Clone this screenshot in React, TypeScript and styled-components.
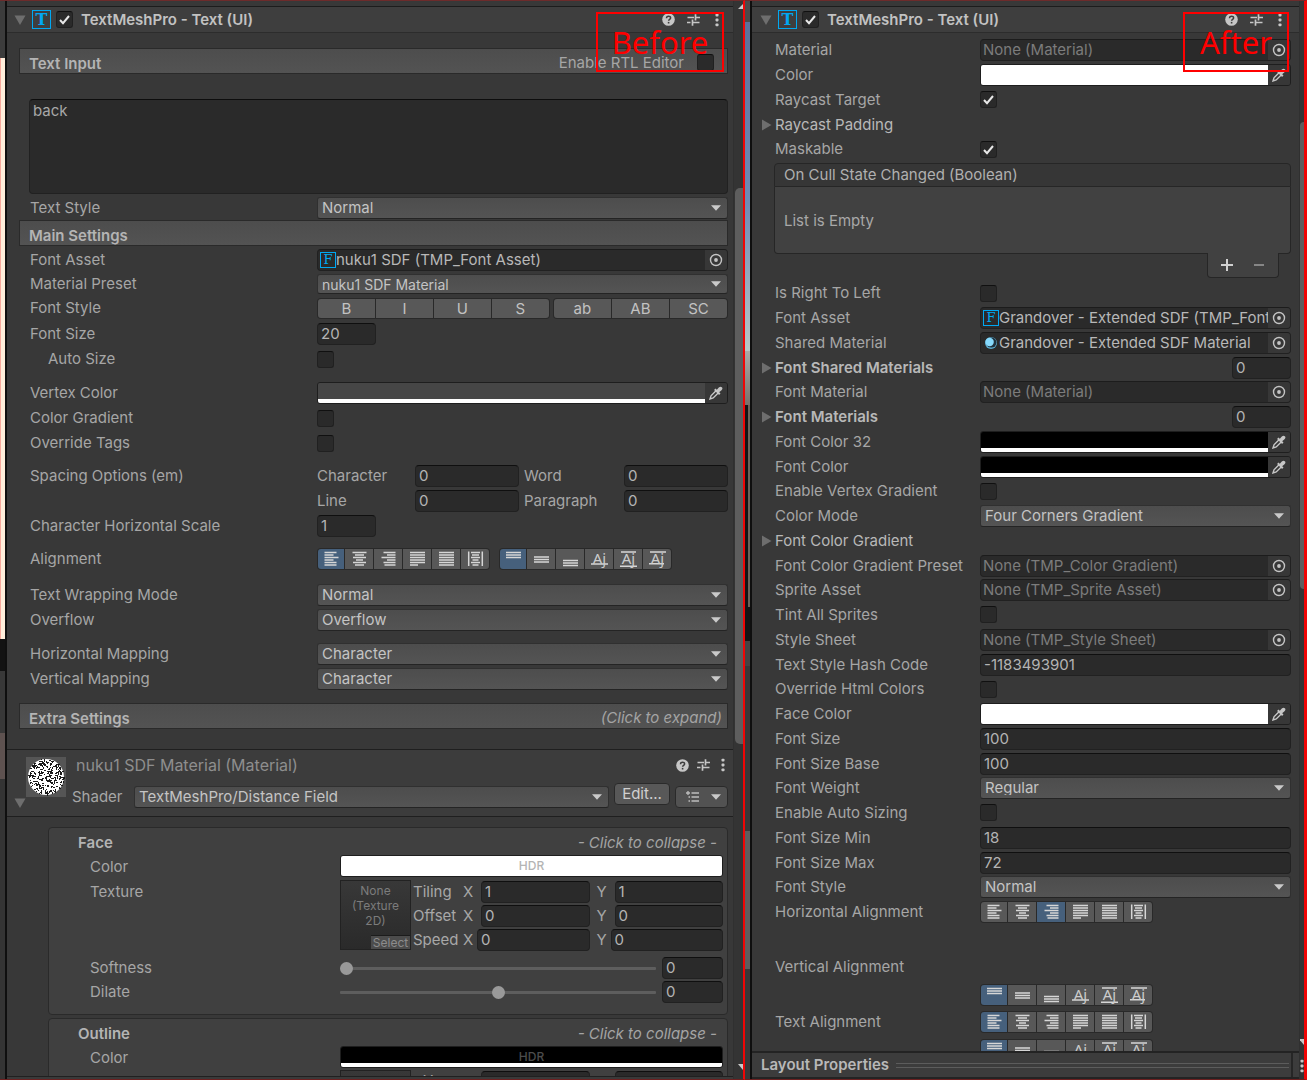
import React, { useId } from "react";
import styled, { createGlobalStyle, css } from "styled-components";

const Global = createGlobalStyle`
  *, *::before, *::after { box-sizing: border-box; }
  html, body, #root { height: 100%; }
  body {
    margin: 0;
    background: #fff;
    color: #a8a8a8;
    font: 15px/20px Inter, "Open Sans", sans-serif;
    overflow: hidden;
  }
  button, input, select, textarea { font: inherit; color: inherit; margin: 0; }
  button { padding: 0; border: 0; background: none; }
  button:focus-visible, input:focus-visible, select:focus-visible { outline: 1px solid #3a79bb; }
`;

/* ---------- page frame ---------- */

const Page = styled.main`
  display: flex;
  height: 100vh;
  padding-right: 7px;
  overflow: hidden;
`;

const Shot = styled.section<{ $grow: number; $edge: number }>`
  position: relative;
  display: flex;
  flex: ${(p) => p.$grow} 1 0;
  min-width: 0;
  border-top: 1px solid #6d2b2b;
  border-bottom: 1px solid #6d2020;
  border-right: ${(p) => p.$edge}px solid #f00505;
  background: #383838;
`;

const Sliver = styled.div<{ $width: number; $line: number }>`
  display: flex;
  flex-direction: column;
  flex: none;
  width: ${(p) => p.$width}px;
  border-right: ${(p) => p.$line}px solid #0f0f0f;
  background: #383838;
`;

const Band = styled.div<{ $h: number; $fill: string }>`
  flex: ${(p) => p.$h} 1 0;
  background: ${(p) => p.$fill};
`;

const Inspector = styled.div`
  display: flex;
  flex-direction: column;
  flex: 1;
  min-width: 0;
  background: #383838;
`;

const Clip = styled.div`
  flex: 1;
  min-height: 0;
  overflow: hidden;
`;

const TopStrip = styled.div`
  height: 6px;
  border-bottom: 1px solid #1c1c1c;
  background: #383838;
`;

const BottomStrip = styled.div`
  height: 3px;
  border-top: 1px solid #202020;
  background: #3a3a3a;
`;

const Scrollbar = styled.div<{ $width: number }>`
  display: flex;
  flex-direction: column;
  align-items: flex-end;
  flex: none;
  width: ${(p) => p.$width}px;
  border-left: 1px solid #303030;
  background: #343434;
  overflow: hidden;
`;

const Space = styled.div<{ $h: number }>`
  flex: ${(p) => p.$h} 1 0;
`;

const Thumb = styled.div<{ $h: number; $width: number }>`
  flex: ${(p) => p.$h} 1 0;
  width: ${(p) => p.$width}px;
  border-radius: 5px 0 0 5px;
  background: #5e5e5e;
`;

const Note = styled.div<{ $right: number; $width: number }>`
  position: absolute;
  top: 11px;
  right: ${(p) => p.$right}px;
  width: ${(p) => p.$width}px;
  height: 60px;
  border: 2px solid #f00;
  color: #f00;
  font: 31px/56px "Noto Sans", "Open Sans", sans-serif;
  text-align: center;
  pointer-events: none;
`;

/* ---------- header ---------- */

const Header = styled.header<{ $pad: string }>`
  display: flex;
  align-items: center;
  height: 26px;
  padding: ${(p) => p.$pad};
  border-bottom: 1px solid #2c2c2c;
  background: #3e3e3e;
`;

const Title = styled.h2`
  flex: 1;
  margin: 0 0 0 8px;
  color: #c2c2c2;
  font-size: 15px;
  line-height: 20px;
  font-weight: 600;
  white-space: nowrap;
`;

const Tools = styled.div<{ $gap: number }>`
  display: flex;
  align-items: center;
  gap: ${(p) => p.$gap}px;
  height: 16px;
  button, svg { display: block; }
`;

const Fold = styled.button`
  flex: none;
  display: block;
  width: 12px;
  height: 12px;
  svg { display: block; }
`;

const Glyph = styled.span<{ $size: number; $font: number }>`
  flex: none;
  width: ${(p) => p.$size}px;
  height: ${(p) => p.$size}px;
  border: 1px solid #00a8f2;
  color: #00a8f2;
  font: ${(p) => p.$font}px/${(p) => p.$size - 2}px "DejaVu Serif", serif;
  text-align: center;
`;

const HeaderGlyph = styled(Glyph)`
  margin: 0 5px 0 6px;
  font-weight: 700;
`;

/* ---------- bars, groups, rows ---------- */

const Bar = styled.div<{ $top: number }>`
  display: flex;
  align-items: center;
  justify-content: space-between;
  height: 26px;
  margin: ${(p) => p.$top}px 5px 0 12px;
  padding: 3px 5px 0 9px;
  border: 1px solid #2a2a2a;
  background: linear-gradient(#4d4d4d, #535353);
  > h3 { padding-top: 2px; }
`;

const BarTitle = styled.h3`
  margin: 0;
  font-size: 15px;
  line-height: 20px;
  font-weight: 600;
  color: #b4b4b4;
`;

const BarHint = styled.button`
  font-style: italic;
  color: #a4a4a4;
`;

const BarToggle = styled.div`
  display: flex;
  align-items: center;
  gap: 13px;
  padding-right: 8px;
`;

const TextArea = styled.textarea`
  display: block;
  width: calc(100% - 27px);
  height: 95px;
  margin: 25px 5px 0 22px;
  padding: 1px 3px;
  border: 1px solid #212121;
  border-top-color: #0d0d0d;
  border-radius: 4px;
  background: #2a2a2a;
  color: #a8a8a8;
  resize: none;
`;

const LeftGroup = styled.div<{ $top: number; $gap?: number }>`
  display: flex;
  flex-direction: column;
  gap: ${(p) => p.$gap ?? 1}px;
  margin: ${(p) => p.$top}px 5px 0 23px;
`;

const LeftRow = styled.div`
  display: grid;
  grid-template-columns: 287px minmax(0, 1fr);
  align-items: center;
  height: 24px;
`;

const RightGroup = styled.div<{ $top: number }>`
  margin: ${(p) => p.$top}px 8px 0 9px;
`;

const RightRow = styled.div`
  display: grid;
  grid-template-columns: 14px 205px minmax(0, 1fr);
  align-items: center;
  height: 25px;
  &:nth-child(4n + 1) { height: 24px; }
`;

const Label = styled.label<{ $indent?: number; $bold?: boolean; $bright?: boolean }>`
  padding-left: ${(p) => p.$indent ?? 0}px;
  white-space: nowrap;
  font-weight: ${(p) => (p.$bold ? 600 : 400)};
  color: ${(p) => (p.$bold || p.$bright ? "#b8b8b8" : "#a6a6a6")};
`;

/* ---------- controls ---------- */

const sunken = css`
  border: 1px solid #212121;
  border-top-color: #0f0f0f;
  border-radius: 4px;
  background: #2a2a2a;
`;

const TextBox = styled.input<{ $width?: number }>`
  width: ${(p) => (p.$width ? p.$width + "px" : "100%")};
  min-width: 0;
  height: 22px;
  padding: 0 3px 1px;
  color: #b4b4b4;
  ${sunken}
`;

const CountBox = styled(TextBox)`
  justify-self: end;
`;

const Check = styled.span`
  flex: none;
  display: grid;
  width: 17px;
  height: 17px;
  > * { grid-area: 1 / 1; margin: 0; }
  svg { pointer-events: none; place-self: center; }
`;

const CheckInput = styled.input`
  appearance: none;
  width: 17px;
  height: 17px;
  border: 1px solid #202020;
  border-top-color: #101010;
  border-radius: 3px;
  background: #2a2a2a;
`;

const SelectWrap = styled.span`
  display: grid;
  flex: 1;
  min-width: 0;
  > * { grid-area: 1 / 1; }
  svg { place-self: center end; margin-right: 7px; pointer-events: none; }
`;

const Select = styled.select<{ $small?: boolean }>`
  appearance: none;
  width: 100%;
  height: ${(p) => (p.$small ? 20 : 22)}px;
  padding: 0 20px 3px 4px;
  border: 1px solid #303030;
  border-bottom-color: #242424;
  border-radius: 3px;
  background: linear-gradient(#4d4d4d, #545454);
  color: #c4c4c4;
  font-size: ${(p) => (p.$small ? 14 : 15)}px;
`;

const ObjectBox = styled.span`
  display: flex;
  align-items: center;
  height: 22px;
  padding-left: 2px;
  overflow: hidden;
  ${sunken}
  border-top-color: #1c1c1c;
`;

const ObjectValue = styled.input<{ $empty?: boolean }>`
  flex: 1;
  min-width: 0;
  height: 20px;
  padding: 0;
  border: 0;
  background: none;
  color: ${(p) => (p.$empty ? "#7c7c7c" : "#b8b8b8")};
`;

const Picker = styled.button`
  flex: none;
  display: grid;
  place-items: center;
  width: 22px;
  height: 20px;
  background: #373737;
`;

const ColorBox = styled.span`
  display: flex;
  height: 22px;
  border: 1px solid #1e1e1e;
  border-radius: 3px;
  overflow: hidden;
  background: #383838;
`;

const Swatch = styled.span`
  flex: 1;
  min-width: 0;
  display: grid;
  grid-template-rows: 16px 4px;
`;

const ColorInput = styled.input`
  appearance: none;
  grid-area: 1 / 1;
  width: 100%;
  height: 16px;
  padding: 0;
  border: 0;
  background: none;
  &::-webkit-color-swatch-wrapper { padding: 0; }
  &::-webkit-color-swatch { border: 0; border-radius: 0; }
`;

const Alpha = styled.span`
  grid-area: 2 / 1;
  background: #fff;
`;

const Hdr = styled.span<{ $color: string }>`
  grid-area: 1 / 1 / 3 / 2;
  place-self: center;
  z-index: 1;
  color: ${(p) => p.$color};
  font-size: 12px;
  font-weight: 500;
  pointer-events: none;
`;

const Segments = styled.div<{ $fill?: boolean }>`
  display: flex;
  gap: ${(p) => (p.$fill ? 3 : 9)}px;
`;

const Segment = styled.div<{ $n?: number }>`
  display: flex;
  flex: ${(p) => (p.$n ? p.$n + " 1 0" : "none")};
  gap: 1px;
  padding: 1px;
  border-radius: 4px;
  background: #292929;
`;

const SegButton = styled.button<{ $on?: boolean; $fill?: boolean }>`
  display: grid;
  place-items: center;
  ${(p) => (p.$fill ? "flex: 1; padding-bottom: 1px;" : "width: 28px;")}
  height: ${(p) => (p.$fill ? 19 : 20)}px;
  background: ${(p) => (p.$on ? "#46607c" : "#585858")};
  color: #c2c2c2;
  &:first-child { border-radius: 3px 0 0 3px; ${(p) => (p.$fill ? "" : "width: 26px;")} }
  &:last-child { border-radius: 0 3px 3px 0; }
  svg { overflow: visible; }
`;

const Spacing = styled.div`
  display: grid;
  grid-template-columns: 98px minmax(0, 1fr) 105px minmax(0, 1fr);
  align-items: center;
  label + input + label { padding-left: 5px; }
`;

/* ---------- event list ---------- */

const EventBox = styled.div`
  display: flex;
  flex-direction: column;
  margin: 2px 8px 0 22px;
`;

const EventTitle = styled.div`
  height: 24px;
  padding: 1px 9px;
  border: 1px solid #262626;
  border-radius: 4px 4px 0 0;
  background: #363636;
  color: #b0b0b0;
`;

const EventBody = styled.div`
  height: 67px;
  padding: 24px 9px 0;
  border: 1px solid #262626;
  border-top: 0;
  border-radius: 0 0 4px 4px;
  background: #414141;
`;

const EventFoot = styled.div`
  align-self: flex-end;
  display: flex;
  justify-content: space-around;
  align-items: center;
  width: 72px;
  height: 25px;
  margin: -1px 12px 0 0;
  padding: 0 3px;
  border: 1px solid #262626;
  border-top: 0;
  border-radius: 0 0 4px 4px;
  background: #414141;
  svg { display: block; }
`;

/* ---------- material ---------- */

const MatHeader = styled.header`
  display: flex;
  height: 68px;
  margin-top: 20px;
  padding: 7px 5px 0 7px;
  border-top: 1px solid #1f1f1f;
  border-bottom: 1px solid #1f1f1f;
  background: #3c3c3c;
`;

const MatFold = styled.div`
  align-self: flex-end;
  height: 19px;
`;

const MatPreview = styled.svg`
  flex: none;
  display: block;
  background: #555;
`;

const MatMain = styled.div`
  flex: 1;
  min-width: 0;
  padding-left: 6px;
`;

const MatTitleRow = styled.div`
  display: flex;
  justify-content: space-between;
  align-items: flex-start;
  height: 26px;
  padding-left: 4px;
`;

const MatTitle = styled.h2`
  margin: 0;
  color: #8e8e8e;
  font-size: 16px;
  line-height: 16px;
  font-weight: 400;
`;

const ShaderRow = styled.div`
  display: flex;
  align-items: center;
  height: 28px;
  label { width: 62px; }
`;

const EditButton = styled.button`
  align-self: flex-start;
  width: 56px;
  height: 22px;
  margin: 0 5px;
  padding-bottom: 2px;
  border: 1px solid #2a2a2a;
  border-radius: 4px;
  background: #585858;
  color: #d0d0d0;
`;

const ListButton = styled.button`
  display: flex;
  align-items: center;
  justify-content: space-between;
  width: 53px;
  height: 22px;
  padding: 0 6px 0 10px;
  border: 1px solid #2a2a2a;
  border-radius: 4px;
  background: #525252;
`;

const MatGroup = styled.section<{ $top: number }>`
  margin: ${(p) => p.$top}px 5px 0 41px;
  padding: 3px 4px 10px 29px;
  border: 1px solid #2a2a2a;
  border-radius: 4px;
  background: #404040;
`;

const MatGroupHead = styled.div`
  display: flex;
  justify-content: space-between;
  align-items: center;
  height: 24px;
  padding-right: 6px;
`;

const MatRow = styled.div<{ $h?: number }>`
  display: grid;
  grid-template-columns: 262px minmax(0, 1fr);
  align-items: start;
  height: ${(p) => p.$h ?? 24}px;
  > label, > span:first-child { padding-left: 12px; line-height: 24px; }
`;

const TexArea = styled.div`
  display: flex;
  gap: 2px;
`;

const TexBox = styled.div`
  display: flex;
  flex-direction: column;
  flex: none;
  width: 71px;
  height: 70px;
  border: 1px solid #222;
  background: linear-gradient(#383838, #2a2a2a);
  color: #7c7c7c;
  font-size: 12px;
  line-height: 15px;
  text-align: center;
  padding-top: 2px;
`;

const TexSelect = styled.button`
  align-self: flex-end;
  width: 39px;
  height: 14px;
  margin-top: auto;
  border-top: 1px solid #1c1c1c;
  background: #4c4c4c;
  color: #8c8c8c;
  line-height: 13px;
`;

const Vectors = styled.div`
  flex: 1;
  min-width: 0;
  display: grid;
  grid-auto-rows: 24px;
`;

const Vector = styled.div<{ $axis: number }>`
  display: flex;
  align-items: center;
  > span { width: 50px; }
  label { flex: none; width: ${(p) => p.$axis}px; }
  input { flex: 1; margin-right: 7px; }
  input:last-child { margin-right: 0; }
`;

const SliderArea = styled.div`
  display: flex;
  align-items: center;
  gap: 6px;
  height: 24px;
`;

const Range = styled.input`
  appearance: none;
  flex: 1;
  min-width: 0;
  height: 13px;
  background: none;
  &::-webkit-slider-runnable-track { height: 3px; border-radius: 1px; background: #5e5e5e; }
  &::-webkit-slider-thumb {
    appearance: none;
    width: 13px;
    height: 13px;
    margin-top: -5px;
    border-radius: 50%;
    background: #999;
  }
`;

/* ---------- footer ---------- */

const LayoutBar = styled.footer`
  display: flex;
  align-items: center;
  height: 28px;
  padding-left: 9px;
  border-top: 2px solid #232323;
  border-bottom: 2px solid #232323;
  background: #3c3c3c;
`;

const LayoutTitle = styled.h3`
  margin: 0 7px 0 0;
  color: #b8b8b8;
  font-size: 15px;
  line-height: 20px;
  font-weight: 600;
`;

const Grip = styled.span`
  flex: 1;
  height: 5px;
  margin-right: 2px;
  border: solid #5c5c5c;
  border-width: 1px 0;
`;

const Divider = styled.span`
  align-self: stretch;
  width: 2px;
  margin-right: 6px;
  background: #262626;
`;

/* ---------- drawings ---------- */

const Down = () => (
  <svg width="12" height="12" viewBox="0 0 12 12"><path d="M0.500 1.500h11L6 11z" fill="#6e6e6e" /></svg>
);
const RightTri = () => (
  <svg width="11" height="12" viewBox="0 0 11 12"><path d="M1 0.500v11L10.500 6z" fill="#6e6e6e" /></svg>
);
const Caret = () => (
  <svg width="10" height="6" viewBox="0 0 10 6"><path d="M0 0.300h10L5 5.800z" fill="#cacaca" /></svg>
);
const Tick = () => (
  <svg width="13" height="13" viewBox="0 0 13 13">
    <path d="M2 7l3 3.200L11 3" fill="none" stroke="#e8e8e8" strokeWidth="2" />
  </svg>
);
const Help = () => (
  <svg width="13" height="13" viewBox="0 0 13 13">
    <circle cx="6.500" cy="6.500" r="6.300" fill="#c6c6c6" />
    <path d="M4.500 5.200c0-2.800 4.200-2.500 4.100-.2 0 1.300-2 1.400-2 2.800" fill="none" stroke="#3c3c3c" strokeWidth="1.500" />
    <rect x="5.800" y="8.900" width="1.600" height="1.600" fill="#3c3c3c" />
  </svg>
);
const Presets = () => (
  <svg width="13" height="12" viewBox="0 0 13 12" fill="none" stroke="#c6c6c6" strokeWidth="1.700">
    <path d="M0.500 3.500h6.500M8.500 3.500h4.500M8.500 0.300v6.200M0 8.500h3.500M5.500 8.500h7M5.500 5.500v6.200" />
  </svg>
);
const Dots = ({ w = 10 }: { w?: number }) => (
  <svg width={w} height="14" viewBox={`${(10 - w) / 2} 0 ${w} 14`} fill="#c8c8c8">
    <rect x="3.500" y="0.800" width="3" height="2.800" rx="0.800" />
    <rect x="3.500" y="5.600" width="3" height="2.800" rx="0.800" />
    <rect x="3.500" y="10.400" width="3" height="2.800" rx="0.800" />
  </svg>
);
const Target = () => (
  <svg width="14" height="14" viewBox="0 0 14 14">
    <circle cx="7" cy="7" r="5.500" fill="none" stroke="#c4c4c4" strokeWidth="1.400" />
    <circle cx="7" cy="7" r="1.900" fill="#c4c4c4" />
  </svg>
);
const Dropper = () => (
  <svg width="14" height="14" viewBox="0 0 14 14">
    <path d="M7 4.800L2 9.800 1 13 4.200 12 9.200 7" fill="none" stroke="#c6c6c6" strokeWidth="1.400" />
    <path d="M5.800 3.200L10.800 8.200" stroke="#c6c6c6" strokeWidth="2" />
    <path d="M7.200 4.500L9.800 1.600q1.600-1.600 3-.3t-.3 3L9.500 6.800z" fill="#c6c6c6" />
  </svg>
);
const SphereSvg = styled.svg`
  flex: none;
`;
const Sphere = () => (
  <SphereSvg width="16" height="14" viewBox="0 0 16 14">
    <circle cx="8" cy="7" r="6" fill="#5aa9cc" />
    <circle cx="8.400" cy="6.600" r="5" fill="#20323e" />
    <circle cx="6.600" cy="6" r="4.200" fill="#86d9fc" />
  </SphereSvg>
);
const ListIcon = () => (
  <svg width="14" height="12" viewBox="0 0 14 12" stroke="#bdbdbd" strokeWidth="1.300">
    <path d="M0 2h4M2 0v4M5.500 2H13M5.500 6H13M5.500 10H13M2.500 6h1.500M2.500 10h1.500" />
  </svg>
);
const Arrow = ({ up }: { up?: boolean }) => (
  <svg width="5" height="6" viewBox="0 0 5 6"><path d={up ? "M5 0v5H0z" : "M5 6V0H0z"} fill="#c8c8c8" /></svg>
);

const LINES: Record<string, string> = {
  left: "M0.500 1.500h12M0.500 4h9M0.500 6.500h14M0.500 9h9M0.500 11.500h12M0.500 14h12",
  center: "M0.500 1.500h14M3 4h9M1 6.500h13M4 9h7M1 11.500h13M3 14h9",
  right: "M2.500 1.500h12M6 4h8.500M0.500 6.500h14M6 9h8.500M2.500 11.500h12M3.500 14h11",
  justify: "M0 1.500h15M0 4h15M0 6.500h15M0 9h15M0 11.500h15M0 14h8",
  flush: "M0 1.500h15M0 4h15M0 6.500h15M0 9h15M0 11.500h15M0 14h15",
  geometry: "M0.700 0.500v14.500M14.300 0.500v14.500M3 1.500h9M4 4h7M3 6.500h9M4.500 9h6M3 11.500h9M4.500 14h6",
  top: "M0 1.500h15M0 4h15M0 6.500h15",
  middle: "M0 6h15M0 8.500h15M0 11h15",
  bottom: "M0 9.500h15M0 12h15M0 14.500h15",
  baseline: "M0 13h17",
  midline: "M1 1h15M0 15.300h17",
  capline: "M1 1h16M0 12.700h15",
};

function AlignIcon({ kind }: { kind: string }) {
  const glyph = ["baseline", "midline", "capline"].includes(kind);
  return (
    <svg width={glyph ? 17 : 15} height="16" viewBox={`0 0 ${glyph ? 17 : 15} 16`}>
      <path d={LINES[kind]} stroke="#d6d6d6" strokeWidth="1.500" />
      {glyph && (
        <text x="8.500" y="12.500" textAnchor="middle" fontFamily="Noto Sans, sans-serif" fontSize="15" fill="#cccccc">Aj</text>
      )}
    </svg>
  );
}

/* Speckled ball of the distance-field preview, from a fixed-seed generator. */
const speckles = (() => {
  let s = 7;
  const rnd = () => (s = (s * 16807) % 2147483647) / 2147483647;
  let d = "";
  for (let i = 0; i < 290; i++) {
    const a = rnd() * Math.PI * 2;
    const r = Math.sqrt(rnd()) * 18;
    const x = Math.round(19.5 + Math.cos(a) * r);
    const y = Math.round(19.5 + Math.sin(a) * r);
    const k = rnd();
    d += k < 0.3 ? `M${x} ${y}h2v1h-2z` : k < 0.6 ? `M${x} ${y}h1v2h-1z` : `M${x} ${y}h1v1h-1z`;
  }
  return d;
})();

/* ---------- composed parts ---------- */

type Render = (id: string) => React.ReactNode;

function LField({ label, indent, children }: { label: string; indent?: number; children: Render }) {
  const id = useId();
  return (
    <LeftRow>
      <Label htmlFor={id} $indent={indent}>{label}</Label>
      {children(id)}
    </LeftRow>
  );
}

function RField({ label, fold, bold, children }: { label: string; fold?: boolean; bold?: boolean; children?: Render }) {
  const id = useId();
  return (
    <RightRow>
      {fold ? <Fold aria-label={"Expand " + label}><RightTri /></Fold> : <span />}
      {children ? (
        <Label htmlFor={id} $bold={bold} $bright={fold}>{label}</Label>
      ) : (
        <Label as="span" $bright={fold}>{label}</Label>
      )}
      {children?.(id)}
    </RightRow>
  );
}

function CheckBox({ id, on, label }: { id?: string; on?: boolean; label?: string }) {
  const [checked, setChecked] = React.useState(!!on);
  return (
    <Check>
      <CheckInput type="checkbox" id={id} aria-label={label} checked={checked} onChange={() => setChecked(!checked)} />
      {checked && <Tick />}
    </Check>
  );
}

function DropDown({ id, value, small }: { id: string; value: string; small?: boolean }) {
  return (
    <SelectWrap>
      <Select id={id} $small={small} defaultValue={value}><option>{value}</option></Select>
      <Caret />
    </SelectWrap>
  );
}

function ObjectField({ id, value, icon }: { id: string; value: string; icon?: React.ReactNode }) {
  return (
    <ObjectBox>
      {icon}
      <ObjectValue id={id} readOnly value={value} $empty={value.startsWith("None")} />
      <Picker aria-label="Pick object"><Target /></Picker>
    </ObjectBox>
  );
}

function ColorField({ id, value, hdr }: { id: string; value: string; hdr?: string }) {
  return (
    <ColorBox>
      <Swatch>
        <ColorInput type="color" id={id} defaultValue={value} />
        <Alpha />
        {hdr && <Hdr $color={hdr}>HDR</Hdr>}
      </Swatch>
      {!hdr && <Picker aria-label="Pick color"><Dropper /></Picker>}
    </ColorBox>
  );
}

const HORIZONTAL = ["left", "center", "right", "justify", "flush", "geometry"];
const VERTICAL = ["top", "middle", "bottom", "baseline", "midline", "capline"];

function AlignGroup({ kinds, on, id }: { kinds: string[]; on: string; id?: string }) {
  return (
    <Segment>
      {kinds.map((k, i) => (
        <SegButton key={k} id={i === 0 ? id : undefined} $on={k === on} aria-pressed={k === on} aria-label={"Align " + k}>
          <AlignIcon kind={k} />
        </SegButton>
      ))}
    </Segment>
  );
}

function StyleGroup({ items }: { items: string[] }) {
  return (
    <Segment $n={items.length}>
      {items.map((t) => <SegButton key={t} $fill>{t}</SegButton>)}
    </Segment>
  );
}

function HeaderTools({ gap }: { gap: number }) {
  return (
    <Tools $gap={gap}>
      <button aria-label="Help"><Help /></button>
      <button aria-label="Presets"><Presets /></button>
      <button aria-label="More"><Dots /></button>
    </Tools>
  );
}

function ComponentHeader({ pad, gap }: { pad: string; gap: number }) {
  return (
    <Header $pad={pad}>
      <Fold aria-label="Collapse component"><Down /></Fold>
      <HeaderGlyph $size={19} $font={16}>T</HeaderGlyph>
      <CheckBox on label="Component enabled" />
      <Title>TextMeshPro - Text (UI)</Title>
      <HeaderTools gap={gap} />
    </Header>
  );
}

function Axis({ name, value, owner }: { name: string; value: string; owner: string }) {
  const id = useId();
  return (
    <>
      <Label htmlFor={id}>{name}</Label>
      <TextBox id={id} defaultValue={value} aria-label={owner + " " + name} />
    </>
  );
}

function TextureRow({ tall }: { tall?: boolean }) {
  return (
    <MatRow $h={tall ? 76 : 24}>
      <Label as="span">Texture</Label>
      <TexArea>
        <TexBox>
          <span>None<br />(Texture<br />2D)</span>
          <TexSelect>Select</TexSelect>
        </TexBox>
        <Vectors>
          <Vector $axis={18}><span>Tiling</span><Axis name="X" value="1" owner="Tiling" /><Axis name="Y" value="1" owner="Tiling" /></Vector>
          {tall && <Vector $axis={18}><span>Offset</span><Axis name="X" value="0" owner="Offset" /><Axis name="Y" value="0" owner="Offset" /></Vector>}
          {tall && <Vector $axis={14}><span>Speed</span><Axis name="X" value="0" owner="Speed" /><Axis name="Y" value="0" owner="Speed" /></Vector>}
        </Vectors>
      </TexArea>
    </MatRow>
  );
}

function MField({ label, h, children }: { label: string; h?: number; children: Render }) {
  const id = useId();
  return (
    <MatRow $h={h}>
      <Label htmlFor={id}>{label}</Label>
      {children(id)}
    </MatRow>
  );
}

function Slider({ id, at, name }: { id: string; at: number; name: string }) {
  return (
    <SliderArea>
      <Range type="range" id={id} defaultValue={at} />
      <TextBox $width={61} defaultValue="0" aria-label={name + " value"} />
    </SliderArea>
  );
}

const FontIcon = () => <Glyph $size={16} $font={13}>F</Glyph>;

/* ---------- panels ---------- */

function BeforePanel() {
  const rtl = useId();
  const sp = useId();
  return (
    <Inspector>
      <Clip>
        <TopStrip />
        <ComponentHeader pad="0 11px 0 7px" gap={12} />
        <Bar $top={15}>
          <BarTitle>Text Input</BarTitle>
          <BarToggle>
            <Label htmlFor={rtl}>Enable RTL Editor</Label>
            <CheckBox id={rtl} />
          </BarToggle>
        </Bar>
        <TextArea defaultValue="back" aria-label="Text Input" />
        <LeftGroup $top={2}>
          <LField label="Text Style">{(id) => <DropDown id={id} value="Normal" />}</LField>
        </LeftGroup>
        <Bar $top={0}><BarTitle>Main Settings</BarTitle></Bar>
        <LeftGroup $top={2} $gap={0}>
          <LField label="Font Asset">{(id) => <ObjectField id={id} value="nuku1 SDF (TMP_Font Asset)" icon={<FontIcon />} />}</LField>
          <LField label="Material Preset">{(id) => <DropDown id={id} value="nuku1 SDF Material" small />}</LField>
          <LeftRow>
            <Label as="span">Font Style</Label>
            <Segments $fill>
              <StyleGroup items={["B", "I", "U", "S"]} />
              <StyleGroup items={["ab", "AB", "SC"]} />
            </Segments>
          </LeftRow>
        </LeftGroup>
        <LeftGroup $top={2}>
          <LField label="Font Size">{(id) => <TextBox id={id} $width={59} defaultValue="20" />}</LField>
          <LField label="Auto Size" indent={18}>{(id) => <CheckBox id={id} />}</LField>
        </LeftGroup>
        <LeftGroup $top={10}>
          <LField label="Vertex Color">{(id) => <ColorField id={id} value="#464646" />}</LField>
          <LField label="Color Gradient">{(id) => <CheckBox id={id} />}</LField>
          <LField label="Override Tags">{(id) => <CheckBox id={id} />}</LField>
        </LeftGroup>
        <LeftGroup $top={9}>
          <LeftRow>
            <Label as="span">Spacing Options (em)</Label>
            <Spacing>
              <Label htmlFor={sp + "c"}>Character</Label><TextBox id={sp + "c"} defaultValue="0" />
              <Label htmlFor={sp + "w"}>Word</Label><TextBox id={sp + "w"} defaultValue="0" />
            </Spacing>
          </LeftRow>
          <LeftRow>
            <span />
            <Spacing>
              <Label htmlFor={sp + "l"}>Line</Label><TextBox id={sp + "l"} defaultValue="0" />
              <Label htmlFor={sp + "p"}>Paragraph</Label><TextBox id={sp + "p"} defaultValue="0" />
            </Spacing>
          </LeftRow>
          <LField label="Character Horizontal Scale">{(id) => <TextBox id={id} $width={59} defaultValue="1" />}</LField>
        </LeftGroup>
        <LeftGroup $top={9}>
          <LeftRow>
            <Label as="span">Alignment</Label>
            <Segments>
              <AlignGroup kinds={HORIZONTAL} on="left" />
              <AlignGroup kinds={VERTICAL} on="top" />
            </Segments>
          </LeftRow>
        </LeftGroup>
        <LeftGroup $top={12}>
          <LField label="Text Wrapping Mode">{(id) => <DropDown id={id} value="Normal" />}</LField>
          <LField label="Overflow">{(id) => <DropDown id={id} value="Overflow" />}</LField>
        </LeftGroup>
        <LeftGroup $top={10}>
          <LField label="Horizontal Mapping">{(id) => <DropDown id={id} value="Character" />}</LField>
          <LField label="Vertical Mapping">{(id) => <DropDown id={id} value="Character" />}</LField>
        </LeftGroup>
        <Bar $top={12}>
          <BarTitle>Extra Settings</BarTitle>
          <BarHint>(Click to expand)</BarHint>
        </Bar>
        <MatHeader>
          <MatFold><Fold aria-label="Collapse material"><Down /></Fold></MatFold>
          <MatPreview width="40" height="40" viewBox="0 0 40 40">
            <circle cx="20" cy="20" r="18" fill="#fff" />
            <path d={speckles} fill="#1a1a1a" />
          </MatPreview>
          <MatMain>
            <MatTitleRow>
              <MatTitle>nuku1 SDF Material (Material)</MatTitle>
              <HeaderTools gap={8} />
            </MatTitleRow>
            <ShaderRow>
              <Label htmlFor={sp + "s"}>Shader</Label>
              <DropDown id={sp + "s"} value="TextMeshPro/Distance Field" />
              <EditButton>Edit...</EditButton>
              <ListButton aria-label="Shader presets"><ListIcon /><Caret /></ListButton>
            </ShaderRow>
          </MatMain>
        </MatHeader>
        <MatGroup $top={10}>
          <MatGroupHead><BarTitle>Face</BarTitle><BarHint>- Click to collapse -</BarHint></MatGroupHead>
          <MField label="Color" h={25}>{(id) => <ColorField id={id} value="#ffffff" hdr="#b4b4b4" />}</MField>
          <TextureRow tall />
          <MField label="Softness">{(id) => <Slider id={id} at={0} name="Softness" />}</MField>
          <MField label="Dilate">{(id) => <Slider id={id} at={50} name="Dilate" />}</MField>
        </MatGroup>
        <MatGroup $top={3}>
          <MatGroupHead><BarTitle>Outline</BarTitle><BarHint>- Click to collapse -</BarHint></MatGroupHead>
          <MField label="Color">{(id) => <ColorField id={id} value="#000000" hdr="#4c4c4c" />}</MField>
          <TextureRow />
        </MatGroup>
      </Clip>
      <BottomStrip />
    </Inspector>
  );
}

function AfterPanel() {
  return (
    <Inspector>
      <Clip>
        <TopStrip />
        <ComponentHeader pad="0 14px 0 8px" gap={12} />
        <RightGroup $top={5}>
          <RField label="Material">{(id) => <ObjectField id={id} value="None (Material)" />}</RField>
          <RField label="Color">{(id) => <ColorField id={id} value="#ffffff" />}</RField>
          <RField label="Raycast Target">{(id) => <CheckBox id={id} on />}</RField>
          <RField label="Raycast Padding" fold />
          <RField label="Maskable">{(id) => <CheckBox id={id} on />}</RField>
        </RightGroup>
        <EventBox>
          <EventTitle>On Cull State Changed (Boolean)</EventTitle>
          <EventBody>List is Empty</EventBody>
          <EventFoot>
            <button aria-label="Add">
              <svg width="12" height="12" viewBox="0 0 12 12"><path d="M0 6h12M6 0v12" stroke="#d0d0d0" strokeWidth="2" /></svg>
            </button>
            <button aria-label="Remove">
              <svg width="12" height="12" viewBox="0 0 12 12"><path d="M1 6h10" stroke="#868686" strokeWidth="2" /></svg>
            </button>
          </EventFoot>
        </EventBox>
        <RightGroup $top={3}>
          <RField label="Is Right To Left">{(id) => <CheckBox id={id} />}</RField>
          <RField label="Font Asset">{(id) => <ObjectField id={id} value="Grandover - Extended SDF (TMP_Font" icon={<FontIcon />} />}</RField>
          <RField label="Shared Material">{(id) => <ObjectField id={id} value="Grandover - Extended SDF Material" icon={<Sphere />} />}</RField>
          <RField label="Font Shared Materials" fold bold>{(id) => <CountBox id={id} $width={59} defaultValue="0" />}</RField>
          <RField label="Font Material">{(id) => <ObjectField id={id} value="None (Material)" />}</RField>
          <RField label="Font Materials" fold bold>{(id) => <CountBox id={id} $width={59} defaultValue="0" />}</RField>
          <RField label="Font Color 32">{(id) => <ColorField id={id} value="#000000" />}</RField>
          <RField label="Font Color">{(id) => <ColorField id={id} value="#000000" />}</RField>
          <RField label="Enable Vertex Gradient">{(id) => <CheckBox id={id} />}</RField>
          <RField label="Color Mode">{(id) => <DropDown id={id} value="Four Corners Gradient" />}</RField>
          <RField label="Font Color Gradient" fold />
          <RField label="Font Color Gradient Preset">{(id) => <ObjectField id={id} value="None (TMP_Color Gradient)" />}</RField>
          <RField label="Sprite Asset">{(id) => <ObjectField id={id} value="None (TMP_Sprite Asset)" />}</RField>
          <RField label="Tint All Sprites">{(id) => <CheckBox id={id} />}</RField>
          <RField label="Style Sheet">{(id) => <ObjectField id={id} value="None (TMP_Style Sheet)" />}</RField>
          <RField label="Text Style Hash Code">{(id) => <TextBox id={id} defaultValue="-1183493901" />}</RField>
          <RField label="Override Html Colors">{(id) => <CheckBox id={id} />}</RField>
          <RField label="Face Color">{(id) => <ColorField id={id} value="#ffffff" />}</RField>
          <RField label="Font Size">{(id) => <TextBox id={id} defaultValue="100" />}</RField>
          <RField label="Font Size Base">{(id) => <TextBox id={id} defaultValue="100" />}</RField>
          <RField label="Font Weight">{(id) => <DropDown id={id} value="Regular" />}</RField>
          <RField label="Enable Auto Sizing">{(id) => <CheckBox id={id} />}</RField>
          <RField label="Font Size Min">{(id) => <TextBox id={id} defaultValue="18" />}</RField>
          <RField label="Font Size Max">{(id) => <TextBox id={id} defaultValue="72" />}</RField>
          <RField label="Font Style">{(id) => <DropDown id={id} value="Normal" />}</RField>
          <RField label="Horizontal Alignment">{(id) => <Segments><AlignGroup id={id} kinds={HORIZONTAL} on="right" /></Segments>}</RField>
        </RightGroup>
        <RightGroup $top={31}>
          <RField label="Vertical Alignment" />
        </RightGroup>
        <RightGroup $top={4}>
          <RightRow><span /><span /><Segments><AlignGroup kinds={VERTICAL} on="top" /></Segments></RightRow>
        </RightGroup>
        <RightGroup $top={3}>
          <RField label="Text Alignment">{(id) => <Segments><AlignGroup id={id} kinds={HORIZONTAL} on="left" /></Segments>}</RField>
        </RightGroup>
        <RightGroup $top={4}>
          <RightRow><span /><span /><Segments><AlignGroup kinds={VERTICAL} on="top" /></Segments></RightRow>
        </RightGroup>
      </Clip>
      <LayoutBar>
        <LayoutTitle>Layout Properties</LayoutTitle>
        <Grip />
        <Divider />
      </LayoutBar>
    </Inspector>
  );
}

export default function App() {
  return (
    <>
      <Global />
      <Page>
        <Shot $grow={743} $edge={2}>
          <Sliver $width={7} $line={2}>
            <Band $h={57} $fill="#3c3c3c" />
            <Band $h={582} $fill="linear-gradient(90deg, #f7a99c 1px, #ffeedb 1px)" />
            <Band $h={32} $fill="#121212" />
            <Band $h={62} $fill="#383838" />
            <Band $h={46} $fill="#5e5250" />
            <Band $h={301} $fill="#343434" />
          </Sliver>
          <BeforePanel />
          <Scrollbar $width={10}>
            <Space $h={3} /><Arrow up /><Space $h={178} />
            <Thumb $h={556} $width={8} />
            <Space $h={320} /><Arrow /><Space $h={9} />
          </Scrollbar>
          <Note $right={19} $width={128}>Before</Note>
        </Shot>
        <Shot $grow={559} $edge={3}>
          <Sliver $width={7} $line={2}>
            <Band $h={21} $fill="#4a4a4a" />
            <Band $h={330} $fill="linear-gradient(#5b7099, #6f8bb5 55%, #b9c8c6)" />
            <Band $h={54} $fill="linear-gradient(#a9aba8, #77716a)" />
            <Band $h={202} $fill="linear-gradient(90deg, #141414 3px, #6a635a 3px)" />
            <Band $h={34} $fill="#141414" />
            <Band $h={25} $fill="#444" />
            <Band $h={166} $fill="#383838" />
            <Band $h={138} $fill="#5e5e5e" />
            <Band $h={110} $fill="#383838" />
          </Sliver>
          <AfterPanel />
          <Scrollbar $width={5}>
            <Space $h={121} />
            <Thumb $h={467} $width={4} />
            <Space $h={450} /><Arrow /><Space $h={14} /><Dots w={4} /><Space $h={6} />
          </Scrollbar>
          <Note $right={15} $width={106}>After</Note>
        </Shot>
      </Page>
    </>
  );
}
